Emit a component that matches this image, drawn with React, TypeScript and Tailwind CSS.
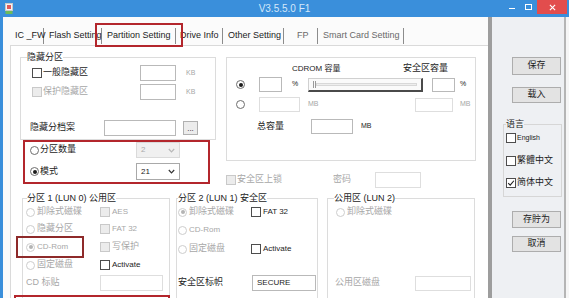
import React from "react";

const font = "font-['Liberation_Sans','Noto_Sans_CJK_SC',sans-serif]";

function Radio({ checked = false, disabled = false }: { checked?: boolean; disabled?: boolean }) {
    return (
        <span
            className={`w-[9px] h-[9px] rounded-full border flex items-center justify-center bg-white shrink-0 ${
                disabled ? "border-[#cdcdcd] bg-[#f2f2f2]" : "border-[#6e6e6e]"
            }`}
        >
            {checked && <span className={`w-[4px] h-[4px] rounded-full ${disabled ? "bg-[#b4b4b4]" : "bg-[#1c1c1c]"}`} />}
        </span>
    );
}

function Check({ checked = false, disabled = false }: { checked?: boolean; disabled?: boolean }) {
    return (
        <span
            className={`w-[10px] h-[10px] border shrink-0 flex items-center justify-center ${
                disabled ? "border-[#c9c9c9] bg-[#ececec]" : "border-[#4d4d4d] bg-white"
            }`}
        >
            {checked && (
                <svg viewBox="0 0 10 10" className="w-[8px] h-[8px]">
                    <path d="M1.5 5.2 L4 7.6 L8.6 2.2" fill="none" stroke="#222" strokeWidth="1.4" />
                </svg>
            )}
        </span>
    );
}

function Field({ className, disabled = false, children }: { className: string; disabled?: boolean; children?: React.ReactNode }) {
    return (
        <div
            className={`${className} border bg-white flex items-center px-[4px] text-[8px] shrink-0 ${
                disabled ? "border-[#dedede]" : "border-[#b9b9b9]"
            }`}
        >
            {children}
        </div>
    );
}

function Select({ value, disabled = false, className }: { value: string; disabled?: boolean; className: string }) {
    return (
        <div
            className={`${className} border flex items-center justify-between px-[4px] text-[8px] ${
                disabled ? "border-[#dadada] bg-[#f0f0f0] text-[#aaaaaa]" : "border-[#a9a9a9] bg-white text-[#1c1c1c]"
            }`}
        >
            <span>{value}</span>
            <svg viewBox="0 0 7 5" className="w-[7px] h-[5px]">
                <path d="M0.8 1 L3.5 3.8 L6.2 1" fill="none" stroke={disabled ? "#b8b8b8" : "#333"} strokeWidth="1.2" />
            </svg>
        </div>
    );
}

function Button({ label, className }: { label: string; className: string }) {
    return (
        <div
            className={`${className} ml-[20px] w-[49px] border border-[#adadad] bg-[#e3e3e3] flex items-center justify-center text-[9px] text-[#1c1c1c]`}
        >
            {label}
        </div>
    );
}

const dim = "text-[#a7a7a7]";

const tabs = [
    { label: "IC _FW", cls: "w-[29px]" },
    { label: "Flash Setting", cls: "w-[53px] ml-[5px]" },
    { label: "Partition Setting", cls: "w-[69px] ml-[5px]" },
    { label: "Drive Info", cls: "w-[43px] ml-[4px]" },
    { label: "Other Setting", cls: "w-[56px] ml-[5px]" },
    { label: "FP", cls: "w-[21px] ml-[13px] text-[#6a6a6a]" },
    { label: "Smart Card Setting", cls: "w-[81px] ml-[5px] text-[#6a6a6a]" },
];

export default function App() {
    return (
        <div className={`w-[569px] h-[298px] overflow-hidden flex flex-col bg-[#3a8fdb] text-[#1c1c1c] ${font}`}>
            {/* title bar */}
            <div className="h-[17px] grid grid-cols-[1fr_auto_1fr] shrink-0">
                <div className="flex items-center pl-[5px]">
                    <svg viewBox="0 0 8 11" className="w-[8px] h-[11px]">
                        <rect x="0.5" y="0.5" width="7" height="7" fill="#f3f3f3" stroke="#c9c9c9" />
                        <rect x="2" y="2" width="4" height="4" fill="#e05a5a" />
                        <rect x="0.5" y="8" width="7" height="3" fill="#6dbb5a" />
                    </svg>
                </div>
                <div className="flex items-center text-[10px] text-[#d4e8fa]">V3.5.5.0 F1</div>
                <div className="flex justify-end items-start pr-[2px]">
                    <div className="w-[17px] h-[14px] flex items-center justify-center">
                        <span className="w-[6px] h-[1px] bg-white mt-[2px]" />
                    </div>
                    <div className="w-[17px] h-[14px] flex items-center justify-center">
                        <span className="w-[7px] h-[6px] border border-white" />
                    </div>
                    <div className="w-[30px] h-[14px] bg-[#e24d4d] flex items-center justify-center">
                        <svg viewBox="0 0 8 8" className="w-[7px] h-[7px]">
                            <path d="M1 1 L7 7 M7 1 L1 7" stroke="white" strokeWidth="1.3" />
                        </svg>
                    </div>
                </div>
            </div>

            {/* body */}
            <div className="flex flex-1 pl-[3px]">
                <div className="w-[485px] bg-[#fbfbfb] flex flex-col relative">
                    {/* tabs */}
                    <div className="h-[28px] flex items-start pt-[11px] pl-[12px] text-[9px] shrink-0">
                        {tabs.map((t) => (
                            <div key={t.label} className={`${t.cls} h-[16px] flex items-center border-r border-[#8c8c8c] whitespace-nowrap`}>
                                {t.label}
                            </div>
                        ))}
                    </div>
                    <div className="absolute left-[92px] top-[6px] w-[88px] h-[24px] border-2 border-[#b3262c]" />

                    {/* page */}
                    <div className="ml-[7px] flex-1 bg-white border-l border-t border-[#dadada] flex flex-col text-[9px]">
                        <div className="flex h-[146px] shrink-0">
                            {/* left column */}
                            <div className="ml-[9px] w-[196px] mt-[5px] flex flex-col">
                                <fieldset className="border border-[#dcdcdc] pb-[3px]">
                                    <legend className="ml-[6px] leading-[12px]">隐藏分区</legend>
                                    <div className="flex items-center h-[16px] mt-[2px] pl-[11px]">
                                        <div className="w-[108px] flex items-center">
                                            <Check />
                                            <span className="ml-[1px]">一般隐藏区</span>
                                        </div>
                                        <Field className="w-[36px] h-[16px]" />
                                        <span className={`ml-[10px] text-[7px] ${dim}`}>KB</span>
                                    </div>
                                    <div className="flex items-center h-[16px] mt-[3px] pl-[11px]">
                                        <div className={`w-[108px] flex items-center ${dim}`}>
                                            <Check disabled />
                                            <span className="ml-[1px]">保护隐藏区</span>
                                        </div>
                                        <Field className="w-[36px] h-[16px]" />
                                        <span className={`ml-[10px] text-[7px] ${dim}`}>KB</span>
                                    </div>
                                    <div className="flex items-center h-[16px] mt-[20px] pl-[9px]">
                                        <div className="w-[74px]">隐藏分档案</div>
                                        <Field className="w-[72px] h-[16px]" />
                                        <div className="ml-[7px] w-[15px] h-[14px] border border-[#b0b0b0] bg-[#ececec] flex items-end justify-center text-[8px] leading-[10px]">
                                            ...
                                        </div>
                                    </div>
                                </fieldset>
                                <div className="ml-[3px] w-[187px] h-[44px] border-2 border-[#b3262c] pl-[5px] flex flex-col">
                                    <div className="flex items-center h-[16px]">
                                        <div className="w-[106px] flex items-center">
                                            <Radio />
                                            <span className="ml-[1px]">分区数量</span>
                                        </div>
                                        <Select value="2" disabled className="w-[44px] h-[16px]" />
                                    </div>
                                    <div className="flex items-center h-[17px] mt-[5px]">
                                        <div className="w-[106px] flex items-center">
                                            <Radio checked />
                                            <span className="ml-[1px]">模式</span>
                                        </div>
                                        <Select value="21" className="w-[44px] h-[17px]" />
                                    </div>
                                </div>
                            </div>

                            {/* middle column */}
                            <div className="ml-[10px] mt-[11px] flex flex-col">
                                <div className="w-[250px] h-[104px] border border-[#dcdcdc] flex flex-col">
                                    <div className="mt-[5px] h-[12px] flex items-center pl-[65px] text-[8px]">
                                        <span className="w-[111px]">CDROM 容量</span>
                                        <span className="text-[9px]">安全区容量</span>
                                    </div>
                                    <div className="mt-[2px] h-[15px] flex items-center pl-[9px]">
                                        <div className="w-[23px]">
                                            <Radio checked />
                                        </div>
                                        <Field className="w-[23px] h-[15px]" />
                                        <span className="ml-[10px] w-[16px] text-[7px]">%</span>
                                        <div className="w-[115px] h-[14px] border border-[#d0d0d0] border-r-2 border-b-2 border-r-[#4a4a4a] border-b-[#4a4a4a] bg-[#fafafa] flex items-center pl-[4px] pr-[4px]">
                                            <span className="w-[3px] h-[7px] border-x border-[#9a9a9a] shrink-0" />
                                            <span className="flex-1 h-[3px] border border-[#d8d8d8] bg-[#eeeeee]" />
                                        </div>
                                        <Field className="ml-[9px] w-[23px] h-[14px]" />
                                        <span className="ml-[5px] text-[7px]">%</span>
                                    </div>
                                    <div className="mt-[5px] h-[15px] flex items-center pl-[9px]">
                                        <div className="w-[23px]">
                                            <Radio />
                                        </div>
                                        <Field disabled className="w-[41px] h-[15px]" />
                                        <span className={`ml-[8px] w-[107px] text-[7px] ${dim}`}>MB</span>
                                        <Field disabled className="w-[38px] h-[14px]" />
                                        <span className={`ml-[7px] text-[7px] ${dim}`}>MB</span>
                                    </div>
                                    <div className="mt-[7px] h-[15px] flex items-center pl-[30px]">
                                        <span className="w-[54px]">总容量</span>
                                        <Field className="w-[42px] h-[15px]" />
                                        <span className="ml-[8px] text-[7px]">MB</span>
                                    </div>
                                </div>
                                <div className="mt-[11px] h-[16px] flex items-center">
                                    <div className={`w-[107px] flex items-center ${dim}`}>
                                        <Check disabled />
                                        <span className="ml-[1px]">安全区上锁</span>
                                    </div>
                                    <span className={`w-[42px] ${dim}`}>密码</span>
                                    <Field disabled className="w-[46px] h-[16px]" />
                                </div>
                            </div>
                        </div>

                        {/* lower groups */}
                        <div className="flex relative">
                            <fieldset className="ml-[11px] w-[148px] h-[110px] border border-[#dcdcdc]">
                                <legend className="ml-[4px] leading-[12px]">分区 1 (LUN 0) 公用区</legend>
                                <div className="flex flex-col pl-[3px]">
                                    <div className="h-[16px] flex items-center">
                                        <div className={`w-[74px] flex items-center ${dim}`}>
                                            <Radio disabled />
                                            <span className="ml-[2px]">卸除式磁碟</span>
                                        </div>
                                        <div className={`flex items-center ${dim}`}>
                                            <Check disabled />
                                            <span className="ml-[2px] text-[8px]">AES</span>
                                        </div>
                                    </div>
                                    <div className="h-[18px] flex items-center">
                                        <div className={`w-[74px] flex items-center ${dim}`}>
                                            <Radio disabled />
                                            <span className="ml-[2px]">隐藏分区</span>
                                        </div>
                                        <div className={`flex items-center ${dim}`}>
                                            <Check disabled />
                                            <span className="ml-[2px] text-[8px]">FAT 32</span>
                                        </div>
                                    </div>
                                    <div className="h-[18px] flex items-center">
                                        <div className={`w-[74px] flex items-center ${dim}`}>
                                            <Radio checked disabled />
                                            <span className="ml-[2px] text-[8px]">CD-Rom</span>
                                        </div>
                                        <div className={`flex items-center ${dim}`}>
                                            <Check disabled />
                                            <span className="ml-[2px]">写保护</span>
                                        </div>
                                    </div>
                                    <div className="h-[18px] flex items-center">
                                        <div className={`w-[74px] flex items-center ${dim}`}>
                                            <Radio disabled />
                                            <span className="ml-[2px]">固定磁盘</span>
                                        </div>
                                        <div className="flex items-center">
                                            <Check />
                                            <span className="ml-[2px] text-[8px]">Activate</span>
                                        </div>
                                    </div>
                                    <div className="h-[18px] flex items-center">
                                        <span className={`w-[74px] ${dim}`}>CD 标贴</span>
                                        <Field disabled className="w-[63px] h-[16px]" />
                                    </div>
                                </div>
                            </fieldset>

                            <fieldset className="ml-[6px] w-[142px] h-[110px] border border-[#dcdcdc]">
                                <legend className="ml-[1px] leading-[12px]">分区 2 (LUN 1) 安全区</legend>
                                <div className="flex flex-col pl-[1px]">
                                    <div className="h-[16px] flex items-center">
                                        <div className={`w-[73px] flex items-center ${dim}`}>
                                            <Radio checked disabled />
                                            <span className="ml-[2px]">卸除式磁碟</span>
                                        </div>
                                        <div className="flex items-center">
                                            <Check />
                                            <span className="ml-[2px] text-[8px]">FAT 32</span>
                                        </div>
                                    </div>
                                    <div className="h-[20px] flex items-center">
                                        <div className={`w-[73px] flex items-center ${dim}`}>
                                            <Radio disabled />
                                            <span className="ml-[2px] text-[8px]">CD-Rom</span>
                                        </div>
                                    </div>
                                    <div className="h-[18px] flex items-center">
                                        <div className={`w-[73px] flex items-center ${dim}`}>
                                            <Radio disabled />
                                            <span className="ml-[2px]">固定磁盘</span>
                                        </div>
                                        <div className="flex items-center">
                                            <Check />
                                            <span className="ml-[2px] text-[8px]">Activate</span>
                                        </div>
                                    </div>
                                    <div className="h-[16px]" />
                                    <div className="h-[18px] flex items-center">
                                        <span className="w-[74px]">安全区标帜</span>
                                        <Field className="w-[64px] h-[16px]">SECURE</Field>
                                    </div>
                                </div>
                            </fieldset>

                            <fieldset className="ml-[9px] w-[148px] h-[110px] border border-[#dcdcdc]">
                                <legend className="ml-[6px] leading-[12px]">公用区 (LUN 2)</legend>
                                <div className="flex flex-col">
                                    <div className={`h-[16px] flex items-center pl-[8px] ${dim}`}>
                                        <Radio disabled />
                                        <span className="ml-[2px]">卸除式磁碟</span>
                                    </div>
                                    <div className="h-[54px]" />
                                    <div className="h-[18px] flex items-center pl-[7px]">
                                        <span className={`w-[80px] ${dim}`}>公用区磁盘</span>
                                        <Field disabled className="w-[56px] h-[15px]" />
                                    </div>
                                </div>
                            </fieldset>

                            <div className="absolute left-[5px] top-[44px] w-[68px] h-[22px] border-2 border-[#8e2a2a]" />
                            <div className="absolute left-[3px] top-[103px] w-[156px] h-[20px] border-2 border-[#b3262c]" />
                        </div>
                    </div>
                </div>

                {/* right panel */}
                <div className="w-[78px] bg-[#eef0f3] border-l-[4px] border-l-[#9d9d9d] border-r-2 border-r-[#b5b5b5] flex flex-col">
                    <Button label="保存" className="mt-[40px] h-[18px]" />
                    <Button label="载入" className="mt-[12px] h-[16px]" />
                    <fieldset className="mt-[15px] ml-[11px] w-[59px] border border-[#d6d6d6] pb-[5px] text-[9px]">
                        <legend className="ml-[2px] leading-[12px]">语言</legend>
                        <div className="h-[16px] flex items-center pl-[2px]">
                            <Check />
                            <span className="ml-[1px] text-[7px]">English</span>
                        </div>
                        <div className="h-[16px] mt-[7px] flex items-center pl-[2px]">
                            <Check />
                            <span className="ml-[1px]">繁體中文</span>
                        </div>
                        <div className="h-[16px] mt-[6px] flex items-center pl-[2px]">
                            <Check checked />
                            <span className="ml-[1px]">简体中文</span>
                        </div>
                    </fieldset>
                    <Button label="存貯为" className="mt-[14px] h-[17px]" />
                    <Button label="取消" className="mt-[8px] h-[16px]" />
                </div>
                <div className="w-[3px] bg-[#f6f6f6]" />
            </div>
        </div>
    );
}
